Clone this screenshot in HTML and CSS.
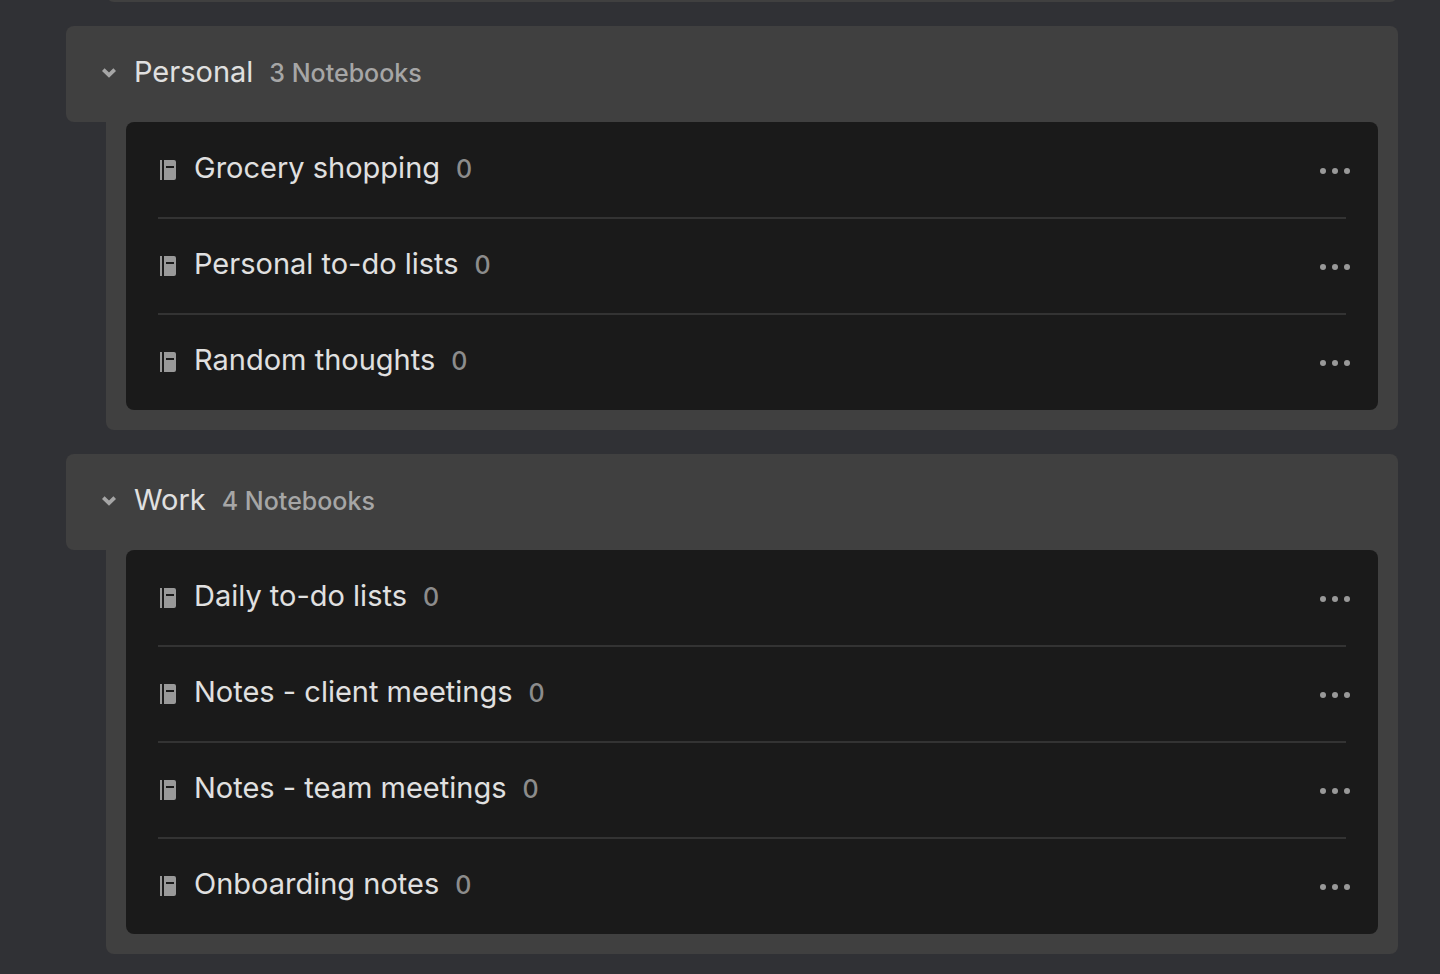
FILE: index.html
```html
<!DOCTYPE html>
<html lang="en">
<head>
    <meta charset="UTF-8">
    <meta name="viewport" content="width=device-width, initial-scale=1.0">
    <title>Notebooks</title>
    <link rel="stylesheet" href="styles.css">
</head>
<body>
    <svg class="sprite" aria-hidden="true">
        <symbol id="icon-chevron" viewBox="0 0 14 10">
            <path d="M0 2.9 L2.6 0.3 L7 4.4 L11.4 0.3 L14 2.9 L7 9.8 Z"/>
        </symbol>
        <symbol id="icon-notebook" viewBox="0 0 16 20">
            <path d="M0 0h2v20H0z"/>
            <path fill-rule="evenodd" d="M4 0h10a2 2 0 0 1 2 2v16a2 2 0 0 1-2 2H4zM6 6v2h8V6z"/>
        </symbol>
        <symbol id="icon-more" viewBox="0 0 30 6">
            <circle cx="3" cy="3" r="3"/>
            <circle cx="15" cy="3" r="3"/>
            <circle cx="27" cy="3" r="3"/>
        </symbol>
    </svg>

    <main class="spaces">
        <div class="space-end"></div>

        <section class="space">
            <button class="space-header" type="button" aria-expanded="true">
                <svg class="chevron"><use href="#icon-chevron"/></svg>
                <span class="label"><span class="name">Personal</span><span class="count">3 Notebooks</span></span>
            </button>
            <div class="space-body">
                <ul class="notebooks">
                    <li class="notebook">
                        <svg class="book"><use href="#icon-notebook"/></svg>
                        <a class="label" href="#"><span class="name">Grocery shopping</span><span class="count">0</span></a>
                        <button class="more" type="button" aria-label="More actions"><svg><use href="#icon-more"/></svg></button>
                    </li>
                    <li class="notebook">
                        <svg class="book"><use href="#icon-notebook"/></svg>
                        <a class="label" href="#"><span class="name">Personal to-do lists</span><span class="count">0</span></a>
                        <button class="more" type="button" aria-label="More actions"><svg><use href="#icon-more"/></svg></button>
                    </li>
                    <li class="notebook">
                        <svg class="book"><use href="#icon-notebook"/></svg>
                        <a class="label" href="#"><span class="name">Random thoughts</span><span class="count">0</span></a>
                        <button class="more" type="button" aria-label="More actions"><svg><use href="#icon-more"/></svg></button>
                    </li>
                </ul>
            </div>
        </section>

        <section class="space">
            <button class="space-header" type="button" aria-expanded="true">
                <svg class="chevron"><use href="#icon-chevron"/></svg>
                <span class="label"><span class="name">Work</span><span class="count">4 Notebooks</span></span>
            </button>
            <div class="space-body">
                <ul class="notebooks">
                    <li class="notebook">
                        <svg class="book"><use href="#icon-notebook"/></svg>
                        <a class="label" href="#"><span class="name">Daily to-do lists</span><span class="count">0</span></a>
                        <button class="more" type="button" aria-label="More actions"><svg><use href="#icon-more"/></svg></button>
                    </li>
                    <li class="notebook">
                        <svg class="book"><use href="#icon-notebook"/></svg>
                        <a class="label" href="#"><span class="name">Notes - client meetings</span><span class="count">0</span></a>
                        <button class="more" type="button" aria-label="More actions"><svg><use href="#icon-more"/></svg></button>
                    </li>
                    <li class="notebook">
                        <svg class="book"><use href="#icon-notebook"/></svg>
                        <a class="label" href="#"><span class="name">Notes - team meetings</span><span class="count">0</span></a>
                        <button class="more" type="button" aria-label="More actions"><svg><use href="#icon-more"/></svg></button>
                    </li>
                    <li class="notebook">
                        <svg class="book"><use href="#icon-notebook"/></svg>
                        <a class="label" href="#"><span class="name">Onboarding notes</span><span class="count">0</span></a>
                        <button class="more" type="button" aria-label="More actions"><svg><use href="#icon-more"/></svg></button>
                    </li>
                </ul>
            </div>
        </section>
    </main>
</body>
</html>
```

FILE: styles.css
```css
* {
    box-sizing: border-box;
}

body {
    margin: 0;
    background-color: #303135;
    color: #e0e0e0;
    font-family: Inter, "Liberation Sans", sans-serif;
    font-size: 29px;
}

button {
    border: 0;
    background: none;
    color: inherit;
    font: inherit;
    text-align: left;
    cursor: pointer;
}

.sprite {
    display: none;
}

.spaces {
    display: flex;
    flex-direction: column;
    gap: 24px;
    padding: 0 42px 20px 66px;
    overflow: hidden;
}

/* bottom edge of the space scrolled above */
.space-end {
    height: 20px;
    margin: -18px 0 0 40px;
    border-radius: 8px;
    background-color: #404040;
}

.space-header {
    display: flex;
    align-items: center;
    gap: 18px;
    width: 100%;
    height: 96px;
    padding: 0 36px 2px;
    border-radius: 8px 8px 0 8px;
    background-color: #404040;
}

.space-body {
    margin-left: 40px;
    padding: 0 20px 20px;
    border-radius: 0 0 8px 8px;
    background-color: #404040;
}

.notebooks {
    margin: 0;
    padding: 1px 32px;
    border-radius: 8px;
    background-color: #1a1a1a;
    list-style: none;
}

.notebook {
    display: flex;
    align-items: center;
    height: 94px;
}

.notebook + .notebook {
    height: 96px;
    border-top: 2px solid #333333;
}

.label {
    display: flex;
    align-items: baseline;
    gap: 16px;
    padding-bottom: 2px;
    color: inherit;
    line-height: 36px;
    text-decoration: none;
}

.notebook .label {
    padding-bottom: 4px;
}

.count {
    color: #a6a6a6;
    font-size: 25px;
    font-weight: 500;
}

.notebook .count {
    color: #8c8c8c;
}

.chevron {
    width: 14px;
    height: 10px;
    fill: #a6a6a6;
}

.book {
    width: 16px;
    height: 20px;
    margin: 0 18px 0 2px;
    fill: #999999;
}

.more {
    display: flex;
    margin: 2px -12px 0 auto;
    padding: 8px;
}

.more svg {
    width: 30px;
    height: 6px;
    fill: #999999;
}
```
